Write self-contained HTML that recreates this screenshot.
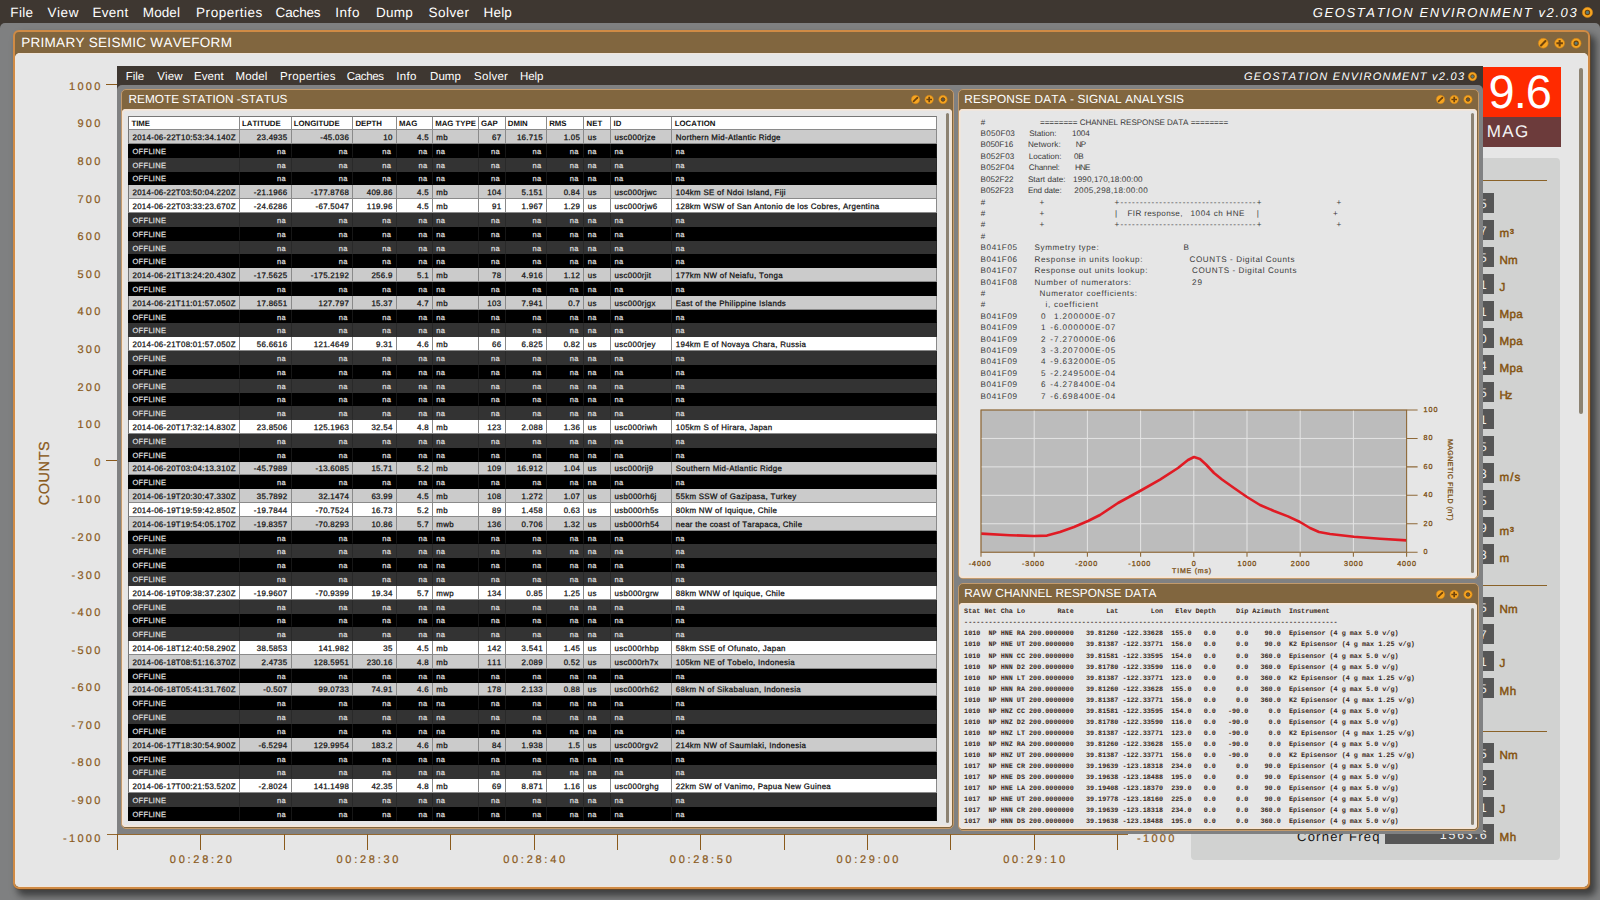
<!DOCTYPE html>
<html><head><meta charset="utf-8"><title>GEOSTATION ENVIRONMENT v2.03</title>
<style>
html,body{margin:0;padding:0}
body{width:1600px;height:900px;overflow:hidden;position:relative;background:#3e3731;font-family:"Liberation Sans",sans-serif;font-kerning:none;text-rendering:geometricPrecision}
.b{position:absolute;display:block}
.t{position:absolute;white-space:pre;line-height:1}
.m{position:absolute;white-space:pre;font-family:"Liberation Mono",monospace;font-weight:bold}

.tb{position:absolute;left:128.2px;top:116.3px;width:808.8px;border-collapse:separate;border-spacing:0;table-layout:fixed;font-size:7.9px;line-height:1;color:#111;}
.tb td{padding:2.6px 3.2px 0 3.3px;height:13.816px;-webkit-text-stroke:0.25px currentColor;box-sizing:border-box;white-space:nowrap;overflow:hidden;border-right:1px solid #8a8a8a;border-bottom:1px solid #8a8a8a;letter-spacing:.3px}
.tb td.r{text-align:right}
.tb tr.h td{font-weight:bold;font-size:7.8px;height:13.8px;border-top:1px solid #777;background:#fff;letter-spacing:0;padding:1px 0 0 2.2px;-webkit-text-stroke:0}
.tb td:first-child{border-left:1px solid #777}
.tb tr.g td{background:#cbcbcb}
.tb tr.w td{background:#fff}
.tb tr.k td{background:#000;color:#ddd;border-color:#000;font-size:7.5px}
.tb tr.d td{background:#333;color:#ddd;border-color:#333;font-size:7.5px}
.tb tr.k td+td,.tb tr.d td+td{border-left:0}
.tb tr.k td,.tb tr.d td{border-right-color:#161616;padding-right:4.6px}
.tb tr.d td{border-right-color:#292929}

</style></head><body>
<div class="b" style="left:0.00px;top:23.00px;width:1600.00px;height:877.00px;background:#7f8081;border-radius:5px 5px 0 0;"></div>
<span class="t" style="left:10.30px;top:6.00px;font-size:13.50px;letter-spacing:0.349px;color:#fff;">File</span>
<span class="t" style="left:47.40px;top:6.00px;font-size:13.50px;letter-spacing:0.613px;color:#fff;">View</span>
<span class="t" style="left:92.40px;top:6.00px;font-size:13.50px;letter-spacing:0.320px;color:#fff;">Event</span>
<span class="t" style="left:142.80px;top:6.00px;font-size:13.50px;letter-spacing:0.083px;color:#fff;">Model</span>
<span class="t" style="left:196.10px;top:6.00px;font-size:13.50px;letter-spacing:0.519px;color:#fff;">Properties</span>
<span class="t" style="left:275.60px;top:6.00px;font-size:13.50px;letter-spacing:-0.155px;color:#fff;">Caches</span>
<span class="t" style="left:335.20px;top:6.00px;font-size:13.50px;letter-spacing:0.561px;color:#fff;">Info</span>
<span class="t" style="left:376.00px;top:6.00px;font-size:13.50px;letter-spacing:0.230px;color:#fff;">Dump</span>
<span class="t" style="left:428.60px;top:6.00px;font-size:13.50px;letter-spacing:0.427px;color:#fff;">Solver</span>
<span class="t" style="left:483.60px;top:6.00px;font-size:13.50px;letter-spacing:0.145px;color:#fff;">Help</span>
<span class="t" style="left:1312.80px;top:6.35px;font-size:13.00px;letter-spacing:1.614px;color:#fff;font-style:italic;">GEOSTATION ENVIRONMENT v2.03</span>
<svg class="b" style="left:1581.15px;top:5.95px" width="12.90" height="12.90"><circle cx="6.45" cy="6.45" r="5.12" fill="#f7a521" stroke="#c9801a" stroke-width="0.65"/><circle cx="6.45" cy="6.45" r="2.18" fill="#587d7c" stroke="#6e430c" stroke-width="1.08"/></svg>
<div class="b" style="left:13px;top:30px;width:1573px;height:855px;border:2px solid #d08b45;border-radius:6px;background:#81663f;box-shadow:0.6px 0.8px 0 0 #6e4720,5px 6px 7px 1px rgba(20,20,20,.6)"></div>
<div class="b" style="left:15.00px;top:53.00px;width:1573.00px;height:834.00px;background:#e6e6e6;border-radius:5px;box-shadow:inset 0 0 0 1px #f1e6dc;"></div>
<span class="t" style="left:21.20px;top:35.50px;font-size:13.50px;letter-spacing:0.291px;color:#fff;">PRIMARY SEISMIC WAVEFORM</span>
<svg class="b" style="left:1536.75px;top:36.85px" width="45.40" height="12.50" viewBox="0 0 45.40 12.50"><circle cx="6.25" cy="6.25" r="4.93" fill="#f7a521" stroke="#c9801a" stroke-width="0.63"/><path d="M4.04 8.46 L8.46 4.04" stroke="#6e430c" stroke-width="2.04" stroke-linecap="round"/><circle cx="22.65" cy="6.25" r="4.93" fill="#f7a521" stroke="#c9801a" stroke-width="0.63"/><path d="M19.40 6.25 H25.91 M22.65 3.00 V9.50" stroke="#6e430c" stroke-width="2.04"/><circle cx="39.15" cy="6.25" r="4.93" fill="#f7a521" stroke="#c9801a" stroke-width="0.63"/><circle cx="39.15" cy="6.25" r="2.10" fill="#587d7c" stroke="#6e430c" stroke-width="1.08"/></svg>
<div class="b" style="left:1579.00px;top:68.00px;width:4.40px;height:346.00px;background:#8c8272;border-radius:2px;"></div>
<span class="t" style="left:69.03px;top:81.85px;font-size:11.00px;letter-spacing:2.300px;color:#8a5a1c;-webkit-text-stroke:.2px;">1000</span>
<span class="t" style="left:77.45px;top:119.44px;font-size:11.00px;letter-spacing:2.300px;color:#8a5a1c;-webkit-text-stroke:.2px;">900</span>
<span class="t" style="left:77.45px;top:157.03px;font-size:11.00px;letter-spacing:2.300px;color:#8a5a1c;-webkit-text-stroke:.2px;">800</span>
<span class="t" style="left:77.45px;top:194.62px;font-size:11.00px;letter-spacing:2.300px;color:#8a5a1c;-webkit-text-stroke:.2px;">700</span>
<span class="t" style="left:77.45px;top:232.21px;font-size:11.00px;letter-spacing:2.300px;color:#8a5a1c;-webkit-text-stroke:.2px;">600</span>
<span class="t" style="left:77.45px;top:269.80px;font-size:11.00px;letter-spacing:2.300px;color:#8a5a1c;-webkit-text-stroke:.2px;">500</span>
<span class="t" style="left:77.45px;top:307.39px;font-size:11.00px;letter-spacing:2.300px;color:#8a5a1c;-webkit-text-stroke:.2px;">400</span>
<span class="t" style="left:77.45px;top:344.98px;font-size:11.00px;letter-spacing:2.300px;color:#8a5a1c;-webkit-text-stroke:.2px;">300</span>
<span class="t" style="left:77.45px;top:382.57px;font-size:11.00px;letter-spacing:2.300px;color:#8a5a1c;-webkit-text-stroke:.2px;">200</span>
<span class="t" style="left:77.45px;top:420.16px;font-size:11.00px;letter-spacing:2.300px;color:#8a5a1c;-webkit-text-stroke:.2px;">100</span>
<span class="t" style="left:94.28px;top:457.75px;font-size:11.00px;letter-spacing:2.300px;color:#8a5a1c;-webkit-text-stroke:.2px;">0</span>
<span class="t" style="left:71.48px;top:495.34px;font-size:11.00px;letter-spacing:2.300px;color:#8a5a1c;-webkit-text-stroke:.2px;">-100</span>
<span class="t" style="left:71.48px;top:532.93px;font-size:11.00px;letter-spacing:2.300px;color:#8a5a1c;-webkit-text-stroke:.2px;">-200</span>
<span class="t" style="left:71.48px;top:570.52px;font-size:11.00px;letter-spacing:2.300px;color:#8a5a1c;-webkit-text-stroke:.2px;">-300</span>
<span class="t" style="left:71.48px;top:608.11px;font-size:11.00px;letter-spacing:2.300px;color:#8a5a1c;-webkit-text-stroke:.2px;">-400</span>
<span class="t" style="left:71.48px;top:645.70px;font-size:11.00px;letter-spacing:2.300px;color:#8a5a1c;-webkit-text-stroke:.2px;">-500</span>
<span class="t" style="left:71.48px;top:683.29px;font-size:11.00px;letter-spacing:2.300px;color:#8a5a1c;-webkit-text-stroke:.2px;">-600</span>
<span class="t" style="left:71.48px;top:720.88px;font-size:11.00px;letter-spacing:2.300px;color:#8a5a1c;-webkit-text-stroke:.2px;">-700</span>
<span class="t" style="left:71.48px;top:758.47px;font-size:11.00px;letter-spacing:2.300px;color:#8a5a1c;-webkit-text-stroke:.2px;">-800</span>
<span class="t" style="left:71.48px;top:796.06px;font-size:11.00px;letter-spacing:2.300px;color:#8a5a1c;-webkit-text-stroke:.2px;">-900</span>
<span class="t" style="left:63.07px;top:833.65px;font-size:11.00px;letter-spacing:2.300px;color:#8a5a1c;-webkit-text-stroke:.2px;">-1000</span>
<div class="b" style="left:106.00px;top:84.00px;width:12.00px;height:1.20px;background:#8a5a1c;"></div>
<div class="b" style="left:106.00px;top:459.60px;width:12.00px;height:1.20px;background:#8a5a1c;"></div>
<div class="b" style="left:107.00px;top:834.00px;width:1021.00px;height:1.00px;background:#94682f;"></div>
<div class="b" style="left:116.90px;top:834.00px;width:1.20px;height:15.60px;background:#8a5a1c;"></div>
<div class="b" style="left:200.23px;top:834.00px;width:1.20px;height:15.60px;background:#8a5a1c;"></div>
<div class="b" style="left:283.57px;top:834.00px;width:1.20px;height:15.60px;background:#8a5a1c;"></div>
<div class="b" style="left:366.90px;top:834.00px;width:1.20px;height:15.60px;background:#8a5a1c;"></div>
<div class="b" style="left:450.23px;top:834.00px;width:1.20px;height:15.60px;background:#8a5a1c;"></div>
<div class="b" style="left:533.56px;top:834.00px;width:1.20px;height:15.60px;background:#8a5a1c;"></div>
<div class="b" style="left:616.90px;top:834.00px;width:1.20px;height:15.60px;background:#8a5a1c;"></div>
<div class="b" style="left:700.23px;top:834.00px;width:1.20px;height:15.60px;background:#8a5a1c;"></div>
<div class="b" style="left:783.56px;top:834.00px;width:1.20px;height:15.60px;background:#8a5a1c;"></div>
<div class="b" style="left:866.90px;top:834.00px;width:1.20px;height:15.60px;background:#8a5a1c;"></div>
<div class="b" style="left:950.23px;top:834.00px;width:1.20px;height:15.60px;background:#8a5a1c;"></div>
<div class="b" style="left:1033.56px;top:834.00px;width:1.20px;height:15.60px;background:#8a5a1c;"></div>
<div class="b" style="left:1116.90px;top:834.00px;width:1.20px;height:15.60px;background:#8a5a1c;"></div>
<span class="t" style="left:169.80px;top:854.85px;font-size:11.00px;letter-spacing:2.740px;color:#8a5a1c;-webkit-text-stroke:.2px;">00:28:20</span>
<span class="t" style="left:336.47px;top:854.85px;font-size:11.00px;letter-spacing:2.740px;color:#8a5a1c;-webkit-text-stroke:.2px;">00:28:30</span>
<span class="t" style="left:503.14px;top:854.85px;font-size:11.00px;letter-spacing:2.740px;color:#8a5a1c;-webkit-text-stroke:.2px;">00:28:40</span>
<span class="t" style="left:669.81px;top:854.85px;font-size:11.00px;letter-spacing:2.740px;color:#8a5a1c;-webkit-text-stroke:.2px;">00:28:50</span>
<span class="t" style="left:836.48px;top:854.85px;font-size:11.00px;letter-spacing:2.740px;color:#8a5a1c;-webkit-text-stroke:.2px;">00:29:00</span>
<span class="t" style="left:1003.15px;top:854.85px;font-size:11.00px;letter-spacing:2.740px;color:#8a5a1c;-webkit-text-stroke:.2px;">00:29:10</span>
<span class="t" style="left:1137.00px;top:833.65px;font-size:11.00px;letter-spacing:2.300px;color:#8a5a1c;-webkit-text-stroke:.2px;">-1000</span>
<span class="t" style="left:45.2px;top:473px;font-size:14.5px;letter-spacing:0.55px;-webkit-text-stroke:0.25px;color:#8a5a1c;transform:translate(-50%,-50%) rotate(-90deg);">COUNTS</span>
<div class="b" style="left:1190.50px;top:157.60px;width:369.50px;height:702.20px;background:#d1d2d1;border-radius:4px;"></div>
<div class="b" style="left:1205.00px;top:180.00px;width:341.60px;height:1.00px;background:#8a6228;"></div>
<div class="b" style="left:1205.00px;top:584.50px;width:341.60px;height:1.00px;background:#8a6228;"></div>
<div class="b" style="left:1205.00px;top:730.50px;width:341.60px;height:1.00px;background:#8a6228;"></div>
<div class="b" style="left:1385.00px;top:193.20px;width:109.40px;height:20.00px;background:#565656;"></div>
<span class="t" style="left:1457.17px;top:197.80px;font-size:12.50px;letter-spacing:1.700px;color:#f0f0f0;">24.5</span>
<div class="b" style="left:1385.00px;top:220.20px;width:109.40px;height:20.00px;background:#565656;"></div>
<span class="t" style="left:1457.17px;top:224.80px;font-size:12.50px;letter-spacing:1.700px;color:#f0f0f0;">0.87</span>
<span class="t" style="left:1499.40px;top:227.58px;font-size:11.60px;letter-spacing:1.074px;color:#84520f;-webkit-text-stroke:.45px;">m³</span>
<div class="b" style="left:1385.00px;top:247.20px;width:109.40px;height:20.00px;background:#565656;"></div>
<span class="t" style="left:1429.48px;top:251.80px;font-size:12.50px;letter-spacing:1.700px;color:#f0f0f0;">1.2E+15</span>
<span class="t" style="left:1499.40px;top:254.71px;font-size:11.60px;letter-spacing:0.260px;color:#84520f;-webkit-text-stroke:.45px;">Nm</span>
<div class="b" style="left:1385.00px;top:274.20px;width:109.40px;height:20.00px;background:#565656;"></div>
<span class="t" style="left:1429.48px;top:278.80px;font-size:12.50px;letter-spacing:1.700px;color:#f0f0f0;">3.1E+11</span>
<span class="t" style="left:1499.40px;top:281.84px;font-size:11.60px;letter-spacing:0.000px;color:#84520f;-webkit-text-stroke:.45px;">J</span>
<div class="b" style="left:1385.00px;top:301.20px;width:109.40px;height:20.00px;background:#565656;"></div>
<span class="t" style="left:1457.17px;top:305.80px;font-size:12.50px;letter-spacing:1.700px;color:#f0f0f0;">2.71</span>
<span class="t" style="left:1499.40px;top:308.97px;font-size:11.60px;letter-spacing:0.367px;color:#84520f;-webkit-text-stroke:.45px;">Mpa</span>
<div class="b" style="left:1385.00px;top:328.20px;width:109.40px;height:20.00px;background:#565656;"></div>
<span class="t" style="left:1457.17px;top:332.80px;font-size:12.50px;letter-spacing:1.700px;color:#f0f0f0;">14.0</span>
<span class="t" style="left:1499.40px;top:336.10px;font-size:11.60px;letter-spacing:0.367px;color:#84520f;-webkit-text-stroke:.45px;">Mpa</span>
<div class="b" style="left:1385.00px;top:355.20px;width:109.40px;height:20.00px;background:#565656;"></div>
<span class="t" style="left:1457.17px;top:359.80px;font-size:12.50px;letter-spacing:1.700px;color:#f0f0f0;">0.34</span>
<span class="t" style="left:1499.40px;top:363.23px;font-size:11.60px;letter-spacing:0.367px;color:#84520f;-webkit-text-stroke:.45px;">Mpa</span>
<div class="b" style="left:1385.00px;top:382.20px;width:109.40px;height:20.00px;background:#565656;"></div>
<span class="t" style="left:1457.17px;top:386.80px;font-size:12.50px;letter-spacing:1.700px;color:#f0f0f0;">1.15</span>
<span class="t" style="left:1499.40px;top:390.36px;font-size:11.60px;letter-spacing:-1.377px;color:#84520f;-webkit-text-stroke:.45px;">Hz</span>
<div class="b" style="left:1385.00px;top:409.20px;width:109.40px;height:20.00px;background:#565656;"></div>
<span class="t" style="left:1471.00px;top:413.80px;font-size:12.50px;letter-spacing:1.700px;color:#f0f0f0;">31</span>
<div class="b" style="left:1385.00px;top:436.20px;width:109.40px;height:20.00px;background:#565656;"></div>
<span class="t" style="left:1465.82px;top:440.80px;font-size:12.50px;letter-spacing:1.700px;color:#f0f0f0;">2.5</span>
<div class="b" style="left:1385.00px;top:463.20px;width:109.40px;height:20.00px;background:#565656;"></div>
<span class="t" style="left:1457.17px;top:467.80px;font-size:12.50px;letter-spacing:1.700px;color:#f0f0f0;">3.43</span>
<span class="t" style="left:1499.40px;top:471.75px;font-size:11.60px;letter-spacing:1.157px;color:#84520f;-webkit-text-stroke:.45px;">m/s</span>
<div class="b" style="left:1385.00px;top:490.20px;width:109.40px;height:20.00px;background:#565656;"></div>
<span class="t" style="left:1457.17px;top:494.80px;font-size:12.50px;letter-spacing:1.700px;color:#f0f0f0;">0.25</span>
<div class="b" style="left:1385.00px;top:517.20px;width:109.40px;height:20.00px;background:#565656;"></div>
<span class="t" style="left:1438.13px;top:521.80px;font-size:12.50px;letter-spacing:1.700px;color:#f0f0f0;">1.4E+9</span>
<span class="t" style="left:1499.40px;top:526.01px;font-size:11.60px;letter-spacing:1.074px;color:#84520f;-webkit-text-stroke:.45px;">m³</span>
<div class="b" style="left:1385.00px;top:544.20px;width:109.40px;height:20.00px;background:#565656;"></div>
<span class="t" style="left:1453.69px;top:548.80px;font-size:12.50px;letter-spacing:1.700px;color:#f0f0f0;">5623</span>
<span class="t" style="left:1499.40px;top:553.14px;font-size:11.60px;letter-spacing:0.000px;color:#84520f;-webkit-text-stroke:.45px;">m</span>
<div class="b" style="left:1385.00px;top:597.10px;width:109.40px;height:20.00px;background:#565656;"></div>
<span class="t" style="left:1429.48px;top:601.70px;font-size:12.50px;letter-spacing:1.700px;color:#f0f0f0;">4.2E+15</span>
<span class="t" style="left:1499.40px;top:603.50px;font-size:11.60px;letter-spacing:0.260px;color:#84520f;-webkit-text-stroke:.45px;">Nm</span>
<div class="b" style="left:1385.00px;top:624.10px;width:109.40px;height:20.00px;background:#565656;"></div>
<span class="t" style="left:1465.82px;top:628.70px;font-size:12.50px;letter-spacing:1.700px;color:#f0f0f0;">7.7</span>
<div class="b" style="left:1385.00px;top:651.10px;width:109.40px;height:20.00px;background:#565656;"></div>
<span class="t" style="left:1429.48px;top:655.70px;font-size:12.50px;letter-spacing:1.700px;color:#f0f0f0;">2.8E+11</span>
<span class="t" style="left:1499.40px;top:658.40px;font-size:11.60px;letter-spacing:0.000px;color:#84520f;-webkit-text-stroke:.45px;">J</span>
<div class="b" style="left:1385.00px;top:678.10px;width:109.40px;height:20.00px;background:#565656;"></div>
<span class="t" style="left:1457.17px;top:682.70px;font-size:12.50px;letter-spacing:1.700px;color:#f0f0f0;">1.35</span>
<span class="t" style="left:1499.40px;top:685.85px;font-size:11.60px;letter-spacing:0.786px;color:#84520f;-webkit-text-stroke:.45px;">Mh</span>
<div class="b" style="left:1385.00px;top:743.10px;width:109.40px;height:20.00px;background:#565656;"></div>
<span class="t" style="left:1429.48px;top:747.70px;font-size:12.50px;letter-spacing:1.700px;color:#f0f0f0;">3.9E+15</span>
<span class="t" style="left:1499.40px;top:749.50px;font-size:11.60px;letter-spacing:0.260px;color:#84520f;-webkit-text-stroke:.45px;">Nm</span>
<div class="b" style="left:1385.00px;top:770.10px;width:109.40px;height:20.00px;background:#565656;"></div>
<span class="t" style="left:1465.82px;top:774.70px;font-size:12.50px;letter-spacing:1.700px;color:#f0f0f0;">8.2</span>
<div class="b" style="left:1385.00px;top:797.10px;width:109.40px;height:20.00px;background:#565656;"></div>
<span class="t" style="left:1429.48px;top:801.70px;font-size:12.50px;letter-spacing:1.700px;color:#f0f0f0;">2.6E+11</span>
<span class="t" style="left:1499.40px;top:804.40px;font-size:11.60px;letter-spacing:0.000px;color:#84520f;-webkit-text-stroke:.45px;">J</span>
<div class="b" style="left:1385.00px;top:824.10px;width:109.40px;height:20.00px;background:#565656;"></div>
<span class="t" style="left:1439.87px;top:828.70px;font-size:12.50px;letter-spacing:1.700px;color:#f0f0f0;">1563.6</span>
<span class="t" style="left:1499.40px;top:831.85px;font-size:11.60px;letter-spacing:0.786px;color:#84520f;-webkit-text-stroke:.45px;">Mh</span>
<span class="t" style="left:1297.00px;top:830.15px;font-size:13.00px;letter-spacing:1.242px;color:#111;">Corner Freq</span>
<div class="b" style="left:1483.00px;top:67.20px;width:78.20px;height:49.50px;background:#ff2a00;"></div>
<div class="b" style="left:1483.00px;top:116.70px;width:78.20px;height:30.60px;background:#6c3b3b;"></div>
<span class="t" style="left:1488.60px;top:67.75px;font-size:47.00px;letter-spacing:-0.968px;color:#fff;">9.6</span>
<span class="t" style="left:1486.70px;top:122.55px;font-size:17.00px;letter-spacing:1.438px;color:#f4f4f4;">MAG</span>
<div class="b" style="left:117.00px;top:66.00px;width:1366.00px;height:26.00px;background:#3e3731;"></div>
<div class="b" style="left:117.00px;top:85.00px;width:1366.00px;height:749.00px;background:#808182;border-radius:5px 5px 0 0;"></div>
<span class="t" style="left:125.70px;top:72.10px;font-size:11.50px;letter-spacing:-0.010px;color:#fff;">File</span>
<span class="t" style="left:157.20px;top:72.10px;font-size:11.50px;letter-spacing:0.125px;color:#fff;">View</span>
<span class="t" style="left:194.00px;top:72.10px;font-size:11.50px;letter-spacing:0.098px;color:#fff;">Event</span>
<span class="t" style="left:235.40px;top:72.10px;font-size:11.50px;letter-spacing:0.170px;color:#fff;">Model</span>
<span class="t" style="left:280.10px;top:72.10px;font-size:11.50px;letter-spacing:0.332px;color:#fff;">Properties</span>
<span class="t" style="left:346.70px;top:72.10px;font-size:11.50px;letter-spacing:-0.318px;color:#fff;">Caches</span>
<span class="t" style="left:396.20px;top:72.10px;font-size:11.50px;letter-spacing:0.373px;color:#fff;">Info</span>
<span class="t" style="left:430.00px;top:72.10px;font-size:11.50px;letter-spacing:0.075px;color:#fff;">Dump</span>
<span class="t" style="left:474.10px;top:72.10px;font-size:11.50px;letter-spacing:0.241px;color:#fff;">Solver</span>
<span class="t" style="left:520.00px;top:72.10px;font-size:11.50px;letter-spacing:-0.117px;color:#fff;">Help</span>
<span class="t" style="left:1244.00px;top:72.15px;font-size:11.00px;letter-spacing:1.244px;color:#fff;font-style:italic;">GEOSTATION ENVIRONMENT v2.03</span>
<svg class="b" style="left:1467.20px;top:70.80px" width="11.00" height="11.00"><circle cx="5.50" cy="5.50" r="4.23" fill="#f7a521" stroke="#c9801a" stroke-width="0.54"/><circle cx="5.50" cy="5.50" r="1.80" fill="#587d7c" stroke="#6e430c" stroke-width="0.95"/></svg>
<div class="b" style="left:120.60px;top:89.00px;width:831.00px;height:737.80px;border:1px solid #c29a6c;border-radius:5px;background:#81663f;"></div>
<div class="b" style="left:122.40px;top:108.50px;width:829.40px;height:718.50px;background:#e6e6e6;border-radius:4px;box-shadow:inset 0 0 0 1.4px #f7e5d5;"></div>
<span class="t" style="left:128.50px;top:93.55px;font-size:11.80px;letter-spacing:0.012px;color:#fff;">REMOTE STATION -STATUS</span>
<svg class="b" style="left:909.80px;top:94.10px" width="38.50" height="11.00" viewBox="0 0 38.50 11.00"><circle cx="5.50" cy="5.50" r="4.23" fill="#f7a521" stroke="#c9801a" stroke-width="0.54"/><path d="M3.61 7.39 L7.39 3.61" stroke="#6e430c" stroke-width="1.70" stroke-linecap="round"/><circle cx="19.20" cy="5.50" r="4.23" fill="#f7a521" stroke="#c9801a" stroke-width="0.54"/><path d="M16.41 5.50 H21.99 M19.20 2.71 V8.29" stroke="#6e430c" stroke-width="1.70"/><circle cx="33.00" cy="5.50" r="4.23" fill="#f7a521" stroke="#c9801a" stroke-width="0.54"/><circle cx="33.00" cy="5.50" r="1.80" fill="#5e5a4c" stroke="#6e430c" stroke-width="0.90"/></svg>
<div class="b" style="left:945.80px;top:113.40px;width:3.40px;height:709.40px;background:#8c8272;border-radius:1.5px;"></div>
<div class="b" style="left:957.60px;top:89.00px;width:519.00px;height:488.30px;border:1px solid #c29a6c;border-radius:5px;background:#81663f;"></div>
<div class="b" style="left:959.40px;top:108.50px;width:517.40px;height:469.00px;background:#e6e6e6;border-radius:4px;box-shadow:inset 0 0 0 1.4px #f7e5d5;"></div>
<span class="t" style="left:964.30px;top:93.55px;font-size:11.80px;letter-spacing:0.154px;color:#fff;">RESPONSE DATA - SIGNAL ANALYSIS</span>
<svg class="b" style="left:1434.80px;top:94.10px" width="38.50" height="11.00" viewBox="0 0 38.50 11.00"><circle cx="5.50" cy="5.50" r="4.23" fill="#f7a521" stroke="#c9801a" stroke-width="0.54"/><path d="M3.61 7.39 L7.39 3.61" stroke="#6e430c" stroke-width="1.70" stroke-linecap="round"/><circle cx="19.20" cy="5.50" r="4.23" fill="#f7a521" stroke="#c9801a" stroke-width="0.54"/><path d="M16.41 5.50 H21.99 M19.20 2.71 V8.29" stroke="#6e430c" stroke-width="1.70"/><circle cx="33.00" cy="5.50" r="4.23" fill="#f7a521" stroke="#c9801a" stroke-width="0.54"/><circle cx="33.00" cy="5.50" r="1.80" fill="#5e5a4c" stroke="#6e430c" stroke-width="0.90"/></svg>
<div class="b" style="left:1470.80px;top:113.40px;width:3.40px;height:459.90px;background:#8c8272;border-radius:1.5px;"></div>
<div class="b" style="left:957.60px;top:583.40px;width:519.00px;height:245.60px;border:1px solid #c29a6c;border-radius:5px;background:#81663f;"></div>
<div class="b" style="left:959.40px;top:602.90px;width:517.40px;height:226.30px;background:#e6e6e6;border-radius:4px;box-shadow:inset 0 0 0 1.4px #f7e5d5;"></div>
<span class="t" style="left:964.30px;top:587.95px;font-size:11.80px;letter-spacing:0.054px;color:#fff;">RAW CHANNEL RESPONSE DATA</span>
<svg class="b" style="left:1434.80px;top:588.50px" width="38.50" height="11.00" viewBox="0 0 38.50 11.00"><circle cx="5.50" cy="5.50" r="4.23" fill="#f7a521" stroke="#c9801a" stroke-width="0.54"/><path d="M3.61 7.39 L7.39 3.61" stroke="#6e430c" stroke-width="1.70" stroke-linecap="round"/><circle cx="19.20" cy="5.50" r="4.23" fill="#f7a521" stroke="#c9801a" stroke-width="0.54"/><path d="M16.41 5.50 H21.99 M19.20 2.71 V8.29" stroke="#6e430c" stroke-width="1.70"/><circle cx="33.00" cy="5.50" r="4.23" fill="#f7a521" stroke="#c9801a" stroke-width="0.54"/><circle cx="33.00" cy="5.50" r="1.80" fill="#5e5a4c" stroke="#6e430c" stroke-width="0.90"/></svg>
<div class="b" style="left:1470.80px;top:607.80px;width:3.40px;height:217.20px;background:#8c8272;border-radius:1.5px;"></div>
<table class="tb"><colgroup><col style="width:111.70px"><col style="width:51.70px"><col style="width:61.70px"><col style="width:43.60px"><col style="width:36.20px"><col style="width:45.70px"><col style="width:26.90px"><col style="width:41.40px"><col style="width:37.40px"><col style="width:26.90px"><col style="width:61.20px"><col style="width:264.40px"></colgroup><tr class="h"><td>TIME</td><td>LATITUDE</td><td>LONGITUDE</td><td>DEPTH</td><td>MAG</td><td>MAG TYPE</td><td>GAP</td><td>DMIN</td><td>RMS</td><td>NET</td><td>ID</td><td>LOCATION</td></tr><tr class="g"><td>2014-06-22T10:53:34.140Z</td><td class="r">23.4935</td><td class="r">-45.036</td><td class="r">10</td><td class="r">4.5</td><td>mb</td><td class="r">67</td><td class="r">16.715</td><td class="r">1.05</td><td>us</td><td>usc000rjze</td><td>Northern Mid-Atlantic Ridge</td></tr><tr class="k"><td>OFFLINE</td><td class="r">na</td><td class="r">na</td><td class="r">na</td><td class="r">na</td><td>na</td><td class="r">na</td><td class="r">na</td><td class="r">na</td><td>na</td><td>na</td><td>na</td></tr><tr class="d"><td>OFFLINE</td><td class="r">na</td><td class="r">na</td><td class="r">na</td><td class="r">na</td><td>na</td><td class="r">na</td><td class="r">na</td><td class="r">na</td><td>na</td><td>na</td><td>na</td></tr><tr class="k"><td>OFFLINE</td><td class="r">na</td><td class="r">na</td><td class="r">na</td><td class="r">na</td><td>na</td><td class="r">na</td><td class="r">na</td><td class="r">na</td><td>na</td><td>na</td><td>na</td></tr><tr class="g"><td>2014-06-22T03:50:04.220Z</td><td class="r">-21.1966</td><td class="r">-177.8768</td><td class="r">409.86</td><td class="r">4.5</td><td>mb</td><td class="r">104</td><td class="r">5.151</td><td class="r">0.84</td><td>us</td><td>usc000rjwc</td><td>104km SE of Ndoi Island, Fiji</td></tr><tr class="w"><td>2014-06-22T03:33:23.670Z</td><td class="r">-24.6286</td><td class="r">-67.5047</td><td class="r">119.96</td><td class="r">4.5</td><td>mb</td><td class="r">91</td><td class="r">1.967</td><td class="r">1.29</td><td>us</td><td>usc000rjw6</td><td>128km WSW of San Antonio de los Cobres, Argentina</td></tr><tr class="d"><td>OFFLINE</td><td class="r">na</td><td class="r">na</td><td class="r">na</td><td class="r">na</td><td>na</td><td class="r">na</td><td class="r">na</td><td class="r">na</td><td>na</td><td>na</td><td>na</td></tr><tr class="k"><td>OFFLINE</td><td class="r">na</td><td class="r">na</td><td class="r">na</td><td class="r">na</td><td>na</td><td class="r">na</td><td class="r">na</td><td class="r">na</td><td>na</td><td>na</td><td>na</td></tr><tr class="d"><td>OFFLINE</td><td class="r">na</td><td class="r">na</td><td class="r">na</td><td class="r">na</td><td>na</td><td class="r">na</td><td class="r">na</td><td class="r">na</td><td>na</td><td>na</td><td>na</td></tr><tr class="k"><td>OFFLINE</td><td class="r">na</td><td class="r">na</td><td class="r">na</td><td class="r">na</td><td>na</td><td class="r">na</td><td class="r">na</td><td class="r">na</td><td>na</td><td>na</td><td>na</td></tr><tr class="g"><td>2014-06-21T13:24:20.430Z</td><td class="r">-17.5625</td><td class="r">-175.2192</td><td class="r">256.9</td><td class="r">5.1</td><td>mb</td><td class="r">78</td><td class="r">4.916</td><td class="r">1.12</td><td>us</td><td>usc000rjit</td><td>177km NW of Neiafu, Tonga</td></tr><tr class="k"><td>OFFLINE</td><td class="r">na</td><td class="r">na</td><td class="r">na</td><td class="r">na</td><td>na</td><td class="r">na</td><td class="r">na</td><td class="r">na</td><td>na</td><td>na</td><td>na</td></tr><tr class="g"><td>2014-06-21T11:01:57.050Z</td><td class="r">17.8651</td><td class="r">127.797</td><td class="r">15.37</td><td class="r">4.7</td><td>mb</td><td class="r">103</td><td class="r">7.941</td><td class="r">0.7</td><td>us</td><td>usc000rjgx</td><td>East of the Philippine Islands</td></tr><tr class="k"><td>OFFLINE</td><td class="r">na</td><td class="r">na</td><td class="r">na</td><td class="r">na</td><td>na</td><td class="r">na</td><td class="r">na</td><td class="r">na</td><td>na</td><td>na</td><td>na</td></tr><tr class="d"><td>OFFLINE</td><td class="r">na</td><td class="r">na</td><td class="r">na</td><td class="r">na</td><td>na</td><td class="r">na</td><td class="r">na</td><td class="r">na</td><td>na</td><td>na</td><td>na</td></tr><tr class="w"><td>2014-06-21T08:01:57.050Z</td><td class="r">56.6616</td><td class="r">121.4649</td><td class="r">9.31</td><td class="r">4.6</td><td>mb</td><td class="r">66</td><td class="r">6.825</td><td class="r">0.82</td><td>us</td><td>usc000rjey</td><td>194km E of Novaya Chara, Russia</td></tr><tr class="d"><td>OFFLINE</td><td class="r">na</td><td class="r">na</td><td class="r">na</td><td class="r">na</td><td>na</td><td class="r">na</td><td class="r">na</td><td class="r">na</td><td>na</td><td>na</td><td>na</td></tr><tr class="k"><td>OFFLINE</td><td class="r">na</td><td class="r">na</td><td class="r">na</td><td class="r">na</td><td>na</td><td class="r">na</td><td class="r">na</td><td class="r">na</td><td>na</td><td>na</td><td>na</td></tr><tr class="d"><td>OFFLINE</td><td class="r">na</td><td class="r">na</td><td class="r">na</td><td class="r">na</td><td>na</td><td class="r">na</td><td class="r">na</td><td class="r">na</td><td>na</td><td>na</td><td>na</td></tr><tr class="k"><td>OFFLINE</td><td class="r">na</td><td class="r">na</td><td class="r">na</td><td class="r">na</td><td>na</td><td class="r">na</td><td class="r">na</td><td class="r">na</td><td>na</td><td>na</td><td>na</td></tr><tr class="d"><td>OFFLINE</td><td class="r">na</td><td class="r">na</td><td class="r">na</td><td class="r">na</td><td>na</td><td class="r">na</td><td class="r">na</td><td class="r">na</td><td>na</td><td>na</td><td>na</td></tr><tr class="w"><td>2014-06-20T17:32:14.830Z</td><td class="r">23.8506</td><td class="r">125.1963</td><td class="r">32.54</td><td class="r">4.8</td><td>mb</td><td class="r">123</td><td class="r">2.088</td><td class="r">1.36</td><td>us</td><td>usc000riwh</td><td>105km S of Hirara, Japan</td></tr><tr class="d"><td>OFFLINE</td><td class="r">na</td><td class="r">na</td><td class="r">na</td><td class="r">na</td><td>na</td><td class="r">na</td><td class="r">na</td><td class="r">na</td><td>na</td><td>na</td><td>na</td></tr><tr class="k"><td>OFFLINE</td><td class="r">na</td><td class="r">na</td><td class="r">na</td><td class="r">na</td><td>na</td><td class="r">na</td><td class="r">na</td><td class="r">na</td><td>na</td><td>na</td><td>na</td></tr><tr class="g"><td>2014-06-20T03:04:13.310Z</td><td class="r">-45.7989</td><td class="r">-13.6085</td><td class="r">15.71</td><td class="r">5.2</td><td>mb</td><td class="r">109</td><td class="r">16.912</td><td class="r">1.04</td><td>us</td><td>usc000rij9</td><td>Southern Mid-Atlantic Ridge</td></tr><tr class="k"><td>OFFLINE</td><td class="r">na</td><td class="r">na</td><td class="r">na</td><td class="r">na</td><td>na</td><td class="r">na</td><td class="r">na</td><td class="r">na</td><td>na</td><td>na</td><td>na</td></tr><tr class="g"><td>2014-06-19T20:30:47.330Z</td><td class="r">35.7892</td><td class="r">32.1474</td><td class="r">63.99</td><td class="r">4.5</td><td>mb</td><td class="r">108</td><td class="r">1.272</td><td class="r">1.07</td><td>us</td><td>usb000rh6j</td><td>55km SSW of Gazipasa, Turkey</td></tr><tr class="w"><td>2014-06-19T19:59:42.850Z</td><td class="r">-19.7844</td><td class="r">-70.7524</td><td class="r">16.73</td><td class="r">5.2</td><td>mb</td><td class="r">89</td><td class="r">1.458</td><td class="r">0.63</td><td>us</td><td>usb000rh5s</td><td>80km NW of Iquique, Chile</td></tr><tr class="g"><td>2014-06-19T19:54:05.170Z</td><td class="r">-19.8357</td><td class="r">-70.8293</td><td class="r">10.86</td><td class="r">5.7</td><td>mwb</td><td class="r">136</td><td class="r">0.706</td><td class="r">1.32</td><td>us</td><td>usb000rh54</td><td>near the coast of Tarapaca, Chile</td></tr><tr class="k"><td>OFFLINE</td><td class="r">na</td><td class="r">na</td><td class="r">na</td><td class="r">na</td><td>na</td><td class="r">na</td><td class="r">na</td><td class="r">na</td><td>na</td><td>na</td><td>na</td></tr><tr class="d"><td>OFFLINE</td><td class="r">na</td><td class="r">na</td><td class="r">na</td><td class="r">na</td><td>na</td><td class="r">na</td><td class="r">na</td><td class="r">na</td><td>na</td><td>na</td><td>na</td></tr><tr class="k"><td>OFFLINE</td><td class="r">na</td><td class="r">na</td><td class="r">na</td><td class="r">na</td><td>na</td><td class="r">na</td><td class="r">na</td><td class="r">na</td><td>na</td><td>na</td><td>na</td></tr><tr class="d"><td>OFFLINE</td><td class="r">na</td><td class="r">na</td><td class="r">na</td><td class="r">na</td><td>na</td><td class="r">na</td><td class="r">na</td><td class="r">na</td><td>na</td><td>na</td><td>na</td></tr><tr class="w"><td>2014-06-19T09:38:37.230Z</td><td class="r">-19.9607</td><td class="r">-70.9399</td><td class="r">19.34</td><td class="r">5.7</td><td>mwp</td><td class="r">134</td><td class="r">0.85</td><td class="r">1.25</td><td>us</td><td>usb000rgrw</td><td>88km WNW of Iquique, Chile</td></tr><tr class="d"><td>OFFLINE</td><td class="r">na</td><td class="r">na</td><td class="r">na</td><td class="r">na</td><td>na</td><td class="r">na</td><td class="r">na</td><td class="r">na</td><td>na</td><td>na</td><td>na</td></tr><tr class="k"><td>OFFLINE</td><td class="r">na</td><td class="r">na</td><td class="r">na</td><td class="r">na</td><td>na</td><td class="r">na</td><td class="r">na</td><td class="r">na</td><td>na</td><td>na</td><td>na</td></tr><tr class="d"><td>OFFLINE</td><td class="r">na</td><td class="r">na</td><td class="r">na</td><td class="r">na</td><td>na</td><td class="r">na</td><td class="r">na</td><td class="r">na</td><td>na</td><td>na</td><td>na</td></tr><tr class="w"><td>2014-06-18T12:40:58.290Z</td><td class="r">38.5853</td><td class="r">141.982</td><td class="r">35</td><td class="r">4.5</td><td>mb</td><td class="r">142</td><td class="r">3.541</td><td class="r">1.45</td><td>us</td><td>usc000rhbp</td><td>58km SSE of Ofunato, Japan</td></tr><tr class="g"><td>2014-06-18T08:51:16.370Z</td><td class="r">2.4735</td><td class="r">128.5951</td><td class="r">230.16</td><td class="r">4.8</td><td>mb</td><td class="r">111</td><td class="r">2.089</td><td class="r">0.52</td><td>us</td><td>usc000rh7x</td><td>105km NE of Tobelo, Indonesia</td></tr><tr class="k"><td>OFFLINE</td><td class="r">na</td><td class="r">na</td><td class="r">na</td><td class="r">na</td><td>na</td><td class="r">na</td><td class="r">na</td><td class="r">na</td><td>na</td><td>na</td><td>na</td></tr><tr class="g"><td>2014-06-18T05:41:31.760Z</td><td class="r">-0.507</td><td class="r">99.0733</td><td class="r">74.91</td><td class="r">4.6</td><td>mb</td><td class="r">178</td><td class="r">2.133</td><td class="r">0.88</td><td>us</td><td>usc000rh62</td><td>68km N of Sikabaluan, Indonesia</td></tr><tr class="k"><td>OFFLINE</td><td class="r">na</td><td class="r">na</td><td class="r">na</td><td class="r">na</td><td>na</td><td class="r">na</td><td class="r">na</td><td class="r">na</td><td>na</td><td>na</td><td>na</td></tr><tr class="d"><td>OFFLINE</td><td class="r">na</td><td class="r">na</td><td class="r">na</td><td class="r">na</td><td>na</td><td class="r">na</td><td class="r">na</td><td class="r">na</td><td>na</td><td>na</td><td>na</td></tr><tr class="k"><td>OFFLINE</td><td class="r">na</td><td class="r">na</td><td class="r">na</td><td class="r">na</td><td>na</td><td class="r">na</td><td class="r">na</td><td class="r">na</td><td>na</td><td>na</td><td>na</td></tr><tr class="g"><td>2014-06-17T18:30:54.900Z</td><td class="r">-6.5294</td><td class="r">129.9954</td><td class="r">183.2</td><td class="r">4.6</td><td>mb</td><td class="r">84</td><td class="r">1.938</td><td class="r">1.5</td><td>us</td><td>usc000rgv2</td><td>214km NW of Saumlaki, Indonesia</td></tr><tr class="k"><td>OFFLINE</td><td class="r">na</td><td class="r">na</td><td class="r">na</td><td class="r">na</td><td>na</td><td class="r">na</td><td class="r">na</td><td class="r">na</td><td>na</td><td>na</td><td>na</td></tr><tr class="d"><td>OFFLINE</td><td class="r">na</td><td class="r">na</td><td class="r">na</td><td class="r">na</td><td>na</td><td class="r">na</td><td class="r">na</td><td class="r">na</td><td>na</td><td>na</td><td>na</td></tr><tr class="w"><td>2014-06-17T00:21:53.520Z</td><td class="r">-2.8024</td><td class="r">141.1498</td><td class="r">42.35</td><td class="r">4.8</td><td>mb</td><td class="r">69</td><td class="r">8.871</td><td class="r">1.16</td><td>us</td><td>usc000rghg</td><td>22km SW of Vanimo, Papua New Guinea</td></tr><tr class="d"><td>OFFLINE</td><td class="r">na</td><td class="r">na</td><td class="r">na</td><td class="r">na</td><td>na</td><td class="r">na</td><td class="r">na</td><td class="r">na</td><td>na</td><td>na</td><td>na</td></tr><tr class="k"><td>OFFLINE</td><td class="r">na</td><td class="r">na</td><td class="r">na</td><td class="r">na</td><td>na</td><td class="r">na</td><td class="r">na</td><td class="r">na</td><td>na</td><td>na</td><td>na</td></tr></table>
<span class="t" style="left:980.80px;top:118.65px;font-size:8.10px;letter-spacing:0.500px;color:#3a3a3a;">#</span>
<span class="t" style="left:1040.00px;top:118.65px;font-size:8.10px;letter-spacing:-0.045px;color:#3a3a3a;">======== CHANNEL RESPONSE DATA ========</span>
<span class="t" style="left:980.60px;top:130.07px;font-size:8.10px;letter-spacing:0.238px;color:#3a3a3a;">B050F03</span>
<span class="t" style="left:1029.20px;top:130.07px;font-size:8.10px;letter-spacing:-0.010px;color:#3a3a3a;">Station:</span>
<span class="t" style="left:1072.00px;top:130.07px;font-size:8.10px;letter-spacing:-0.106px;color:#3a3a3a;">1004</span>
<span class="t" style="left:980.60px;top:141.49px;font-size:8.10px;letter-spacing:-0.046px;color:#3a3a3a;">B050F16</span>
<span class="t" style="left:1027.90px;top:141.49px;font-size:8.10px;letter-spacing:0.120px;color:#3a3a3a;">Network:</span>
<span class="t" style="left:1075.70px;top:141.49px;font-size:8.10px;letter-spacing:-0.852px;color:#3a3a3a;">NP</span>
<span class="t" style="left:980.60px;top:152.91px;font-size:8.10px;letter-spacing:0.154px;color:#3a3a3a;">B052F03</span>
<span class="t" style="left:1028.80px;top:152.91px;font-size:8.10px;letter-spacing:-0.034px;color:#3a3a3a;">Location:</span>
<span class="t" style="left:1074.00px;top:152.91px;font-size:8.10px;letter-spacing:-0.307px;color:#3a3a3a;">0B</span>
<span class="t" style="left:980.60px;top:164.33px;font-size:8.10px;letter-spacing:0.154px;color:#3a3a3a;">B052F04</span>
<span class="t" style="left:1028.80px;top:164.33px;font-size:8.10px;letter-spacing:-0.189px;color:#3a3a3a;">Channel:</span>
<span class="t" style="left:1074.90px;top:164.33px;font-size:8.10px;letter-spacing:-0.851px;color:#3a3a3a;">HNE</span>
<span class="t" style="left:980.60px;top:175.75px;font-size:8.10px;letter-spacing:0.004px;color:#3a3a3a;">B052F22</span>
<span class="t" style="left:1027.90px;top:175.75px;font-size:8.10px;letter-spacing:0.033px;color:#3a3a3a;">Start date:</span>
<span class="t" style="left:1073.10px;top:175.75px;font-size:8.10px;letter-spacing:0.121px;color:#3a3a3a;">1990,170,18:00:00</span>
<span class="t" style="left:980.60px;top:187.17px;font-size:8.10px;letter-spacing:0.004px;color:#3a3a3a;">B052F23</span>
<span class="t" style="left:1027.90px;top:187.17px;font-size:8.10px;letter-spacing:-0.097px;color:#3a3a3a;">End date:</span>
<span class="t" style="left:1074.20px;top:187.17px;font-size:8.10px;letter-spacing:0.371px;color:#3a3a3a;">2005,298,18:00:00</span>
<span class="t" style="left:980.80px;top:198.59px;font-size:8.10px;letter-spacing:0.500px;color:#3a3a3a;">#</span>
<span class="t" style="left:1039.50px;top:198.59px;font-size:8.10px;letter-spacing:0.500px;color:#3a3a3a;">+</span>
<span class="t" style="left:1114.50px;top:198.59px;font-size:8.10px;letter-spacing:1.198px;color:#3a3a3a;">+-----------------------------------+</span>
<span class="t" style="left:1336.50px;top:198.59px;font-size:8.10px;letter-spacing:0.500px;color:#3a3a3a;">+</span>
<span class="t" style="left:980.80px;top:221.43px;font-size:8.10px;letter-spacing:0.500px;color:#3a3a3a;">#</span>
<span class="t" style="left:1039.50px;top:221.43px;font-size:8.10px;letter-spacing:0.500px;color:#3a3a3a;">+</span>
<span class="t" style="left:1114.50px;top:221.43px;font-size:8.10px;letter-spacing:1.198px;color:#3a3a3a;">+-----------------------------------+</span>
<span class="t" style="left:1336.50px;top:221.43px;font-size:8.10px;letter-spacing:0.500px;color:#3a3a3a;">+</span>
<span class="t" style="left:980.80px;top:210.01px;font-size:8.10px;letter-spacing:0.500px;color:#3a3a3a;">#</span>
<span class="t" style="left:1039.50px;top:210.01px;font-size:8.10px;letter-spacing:0.500px;color:#3a3a3a;">+</span>
<span class="t" style="left:1115.00px;top:210.01px;font-size:8.10px;letter-spacing:0.500px;color:#3a3a3a;">|</span>
<span class="t" style="left:1127.50px;top:210.01px;font-size:8.10px;letter-spacing:0.344px;color:#3a3a3a;">FIR response,</span>
<span class="t" style="left:1190.50px;top:210.01px;font-size:8.10px;letter-spacing:0.582px;color:#3a3a3a;">1004 ch HNE</span>
<span class="t" style="left:1256.80px;top:210.01px;font-size:8.10px;letter-spacing:0.500px;color:#3a3a3a;">|</span>
<span class="t" style="left:1333.00px;top:210.01px;font-size:8.10px;letter-spacing:0.500px;color:#3a3a3a;">+</span>
<span class="t" style="left:980.80px;top:232.85px;font-size:8.10px;letter-spacing:0.500px;color:#3a3a3a;">#</span>
<span class="t" style="left:980.60px;top:244.27px;font-size:8.10px;letter-spacing:0.588px;color:#3a3a3a;">B041F05</span>
<span class="t" style="left:1034.50px;top:244.27px;font-size:8.10px;letter-spacing:0.611px;color:#3a3a3a;">Symmetry type:</span>
<span class="t" style="left:1183.50px;top:244.27px;font-size:8.10px;letter-spacing:0.500px;color:#3a3a3a;">B</span>
<span class="t" style="left:980.60px;top:255.69px;font-size:8.10px;letter-spacing:0.588px;color:#3a3a3a;">B041F06</span>
<span class="t" style="left:1034.50px;top:255.69px;font-size:8.10px;letter-spacing:0.635px;color:#3a3a3a;">Response in units lookup:</span>
<span class="t" style="left:1189.50px;top:255.69px;font-size:8.10px;letter-spacing:0.599px;color:#3a3a3a;">COUNTS - Digital Counts</span>
<span class="t" style="left:980.60px;top:267.11px;font-size:8.10px;letter-spacing:0.588px;color:#3a3a3a;">B041F07</span>
<span class="t" style="left:1034.50px;top:267.11px;font-size:8.10px;letter-spacing:0.611px;color:#3a3a3a;">Response out units lookup:</span>
<span class="t" style="left:1192.00px;top:267.11px;font-size:8.10px;letter-spacing:0.576px;color:#3a3a3a;">COUNTS - Digital Counts</span>
<span class="t" style="left:980.60px;top:278.53px;font-size:8.10px;letter-spacing:0.588px;color:#3a3a3a;">B041F08</span>
<span class="t" style="left:1034.50px;top:278.53px;font-size:8.10px;letter-spacing:0.661px;color:#3a3a3a;">Number of numerators:</span>
<span class="t" style="left:1192.00px;top:278.53px;font-size:8.10px;letter-spacing:0.990px;color:#3a3a3a;">29</span>
<span class="t" style="left:980.80px;top:289.95px;font-size:8.10px;letter-spacing:0.500px;color:#3a3a3a;">#</span>
<span class="t" style="left:1039.50px;top:289.95px;font-size:8.10px;letter-spacing:0.646px;color:#3a3a3a;">Numerator coefficients:</span>
<span class="t" style="left:980.80px;top:301.37px;font-size:8.10px;letter-spacing:0.500px;color:#3a3a3a;">#</span>
<span class="t" style="left:1045.50px;top:301.37px;font-size:8.10px;letter-spacing:0.748px;color:#3a3a3a;">i, coefficient</span>
<span class="t" style="left:980.60px;top:312.79px;font-size:8.10px;letter-spacing:0.588px;color:#3a3a3a;">B041F09</span>
<span class="t" style="left:1041.00px;top:312.79px;font-size:8.10px;letter-spacing:0.500px;color:#3a3a3a;">0</span>
<span class="t" style="left:1053.96px;top:312.79px;font-size:8.10px;letter-spacing:0.950px;color:#3a3a3a;">1.200000E-07</span>
<span class="t" style="left:980.60px;top:324.21px;font-size:8.10px;letter-spacing:0.588px;color:#3a3a3a;">B041F09</span>
<span class="t" style="left:1041.00px;top:324.21px;font-size:8.10px;letter-spacing:0.500px;color:#3a3a3a;">1</span>
<span class="t" style="left:1050.31px;top:324.21px;font-size:8.10px;letter-spacing:0.950px;color:#3a3a3a;">-6.000000E-07</span>
<span class="t" style="left:980.60px;top:335.63px;font-size:8.10px;letter-spacing:0.588px;color:#3a3a3a;">B041F09</span>
<span class="t" style="left:1041.00px;top:335.63px;font-size:8.10px;letter-spacing:0.500px;color:#3a3a3a;">2</span>
<span class="t" style="left:1050.31px;top:335.63px;font-size:8.10px;letter-spacing:0.950px;color:#3a3a3a;">-7.270000E-06</span>
<span class="t" style="left:980.60px;top:347.05px;font-size:8.10px;letter-spacing:0.588px;color:#3a3a3a;">B041F09</span>
<span class="t" style="left:1041.00px;top:347.05px;font-size:8.10px;letter-spacing:0.500px;color:#3a3a3a;">3</span>
<span class="t" style="left:1050.31px;top:347.05px;font-size:8.10px;letter-spacing:0.950px;color:#3a3a3a;">-3.207000E-05</span>
<span class="t" style="left:980.60px;top:358.47px;font-size:8.10px;letter-spacing:0.588px;color:#3a3a3a;">B041F09</span>
<span class="t" style="left:1041.00px;top:358.47px;font-size:8.10px;letter-spacing:0.500px;color:#3a3a3a;">4</span>
<span class="t" style="left:1050.31px;top:358.47px;font-size:8.10px;letter-spacing:0.950px;color:#3a3a3a;">-9.632000E-05</span>
<span class="t" style="left:980.60px;top:369.89px;font-size:8.10px;letter-spacing:0.588px;color:#3a3a3a;">B041F09</span>
<span class="t" style="left:1041.00px;top:369.89px;font-size:8.10px;letter-spacing:0.500px;color:#3a3a3a;">5</span>
<span class="t" style="left:1050.31px;top:369.89px;font-size:8.10px;letter-spacing:0.950px;color:#3a3a3a;">-2.249500E-04</span>
<span class="t" style="left:980.60px;top:381.31px;font-size:8.10px;letter-spacing:0.588px;color:#3a3a3a;">B041F09</span>
<span class="t" style="left:1041.00px;top:381.31px;font-size:8.10px;letter-spacing:0.500px;color:#3a3a3a;">6</span>
<span class="t" style="left:1050.31px;top:381.31px;font-size:8.10px;letter-spacing:0.950px;color:#3a3a3a;">-4.278400E-04</span>
<span class="t" style="left:980.60px;top:392.73px;font-size:8.10px;letter-spacing:0.588px;color:#3a3a3a;">B041F09</span>
<span class="t" style="left:1041.00px;top:392.73px;font-size:8.10px;letter-spacing:0.500px;color:#3a3a3a;">7</span>
<span class="t" style="left:1050.31px;top:392.73px;font-size:8.10px;letter-spacing:0.950px;color:#3a3a3a;">-6.698400E-04</span>
<svg class="b" style="left:960px;top:400px" width="515" height="178" viewBox="960 400 515 178" font-family="Liberation Sans, sans-serif" fill="#7d5218" stroke="#7d5218" stroke-width="0.3"><rect x="981.0" y="410.0" width="425.6" height="142.2" fill="#bcbcbc"/><path d="M1034.20 410.0V552.2M1087.40 410.0V552.2M1140.60 410.0V552.2M1193.80 410.0V552.2M1247.00 410.0V552.2M1300.20 410.0V552.2M1353.40 410.0V552.2M981.0 438.44H1406.6M981.0 466.88H1406.6M981.0 495.32H1406.6M981.0 523.76H1406.6" stroke="#e4e4e4" stroke-width="1" fill="none"/><polyline points="981.0,533.6 1010.0,535.2 1034.0,536.0 1047.0,535.6 1060.0,532.0 1074.0,527.0 1088.0,521.0 1100.0,515.0 1118.0,503.0 1140.0,491.0 1160.0,479.6 1178.0,468.0 1188.0,460.0 1194.0,457.0 1200.0,459.0 1206.0,464.5 1214.0,473.0 1222.0,479.5 1234.0,488.0 1247.0,497.0 1260.0,505.0 1274.0,511.0 1288.0,516.4 1300.0,522.0 1310.0,528.0 1319.0,532.0 1330.0,534.0 1354.0,536.8 1380.0,538.8 1406.6,540.4" fill="none" stroke="#e01b24" stroke-width="2.6" stroke-linejoin="round" stroke-linecap="butt"/><rect x="981.0" y="410.0" width="425.6" height="142.2" fill="none" stroke="#8f6a3a" stroke-width="1.1"/><path d="M981.00 552.2V556.7M1034.20 552.2V556.7M1087.40 552.2V556.7M1140.60 552.2V556.7M1193.80 552.2V556.7M1247.00 552.2V556.7M1300.20 552.2V556.7M1353.40 552.2V556.7M1406.60 552.2V556.7M1406.6 410.00H1417.6M1406.6 438.44H1417.6M1406.6 466.88H1417.6M1406.6 495.32H1417.6M1406.6 523.76H1417.6M1406.6 552.20H1417.6" stroke="#8f6a3a" stroke-width="1.1" fill="none"/><text x="980.2" y="566" font-size="7.2" letter-spacing="0.9" text-anchor="middle">-4000</text><text x="1033.4" y="566" font-size="7.2" letter-spacing="0.9" text-anchor="middle">-3000</text><text x="1086.6" y="566" font-size="7.2" letter-spacing="0.9" text-anchor="middle">-2000</text><text x="1139.8" y="566" font-size="7.2" letter-spacing="0.9" text-anchor="middle">-1000</text><text x="1194.2" y="566" font-size="7.2" letter-spacing="0.9" text-anchor="middle">0</text><text x="1247.4" y="566" font-size="7.2" letter-spacing="0.9" text-anchor="middle">1000</text><text x="1300.6" y="566" font-size="7.2" letter-spacing="0.9" text-anchor="middle">2000</text><text x="1353.8" y="566" font-size="7.2" letter-spacing="0.9" text-anchor="middle">3000</text><text x="1407.0" y="566" font-size="7.2" letter-spacing="0.9" text-anchor="middle">4000</text><text x="1423.6" y="411.9" font-size="7.2" letter-spacing="0.9">100</text><text x="1423.6" y="440.3" font-size="7.2" letter-spacing="0.9">80</text><text x="1423.6" y="468.8" font-size="7.2" letter-spacing="0.9">60</text><text x="1423.6" y="497.2" font-size="7.2" letter-spacing="0.9">40</text><text x="1423.6" y="525.7" font-size="7.2" letter-spacing="0.9">20</text><text x="1423.6" y="554.1" font-size="7.2" letter-spacing="0.9">0</text><text x="1192" y="572.6" font-size="7" letter-spacing="0.8" text-anchor="middle">TIME (ms)</text><text transform="translate(1447.6 480) rotate(90)" font-size="7" letter-spacing="0.45" text-anchor="middle">MAGNETIC FIELD (nT)</text></svg>
<span class="m" style="left:964.1px;top:609.21px;font-size:6.77px;line-height:6.77px;color:#3a2a1c">Stat Net Cha Lo        Rate        Lat        Lon   Elev Depth     Dip Azimuth  Instrument</span>
<span class="m" style="left:964.1px;top:620.01px;font-size:6.77px;line-height:6.77px;color:#3a2a1c">--------------------------------------------------------------------------------------------</span>
<span class="m" style="left:964.1px;top:631.41px;font-size:6.77px;line-height:6.77px;color:#3a2a1c">1010  NP HNE RA 200.0000000   39.81260 -122.33628  155.0   0.0     0.0    90.0  Episensor (4 g max 5.0 v/g)</span>
<span class="m" style="left:964.1px;top:642.46px;font-size:6.77px;line-height:6.77px;color:#3a2a1c">1010  NP HNE UT 200.0000000   39.81387 -122.33771  156.0   0.0     0.0    90.0  K2 Episensor (4 g max 1.25 v/g)</span>
<span class="m" style="left:964.1px;top:653.51px;font-size:6.77px;line-height:6.77px;color:#3a2a1c">1010  NP HNN CC 200.0000000   39.81581 -122.33595  154.0   0.0     0.0   360.0  Episensor (4 g max 5.0 v/g)</span>
<span class="m" style="left:964.1px;top:664.56px;font-size:6.77px;line-height:6.77px;color:#3a2a1c">1010  NP HNN D2 200.0000000   39.81780 -122.33590  116.0   0.0     0.0   360.0  Episensor (4 g max 5.0 v/g)</span>
<span class="m" style="left:964.1px;top:675.62px;font-size:6.77px;line-height:6.77px;color:#3a2a1c">1010  NP HNN LT 200.0000000   39.81387 -122.33771  123.0   0.0     0.0   360.0  K2 Episensor (4 g max 1.25 v/g)</span>
<span class="m" style="left:964.1px;top:686.66px;font-size:6.77px;line-height:6.77px;color:#3a2a1c">1010  NP HNN RA 200.0000000   39.81260 -122.33628  155.0   0.0     0.0   360.0  Episensor (4 g max 5.0 v/g)</span>
<span class="m" style="left:964.1px;top:697.71px;font-size:6.77px;line-height:6.77px;color:#3a2a1c">1010  NP HNN UT 200.0000000   39.81387 -122.33771  156.0   0.0     0.0   360.0  K2 Episensor (4 g max 1.25 v/g)</span>
<span class="m" style="left:964.1px;top:708.76px;font-size:6.77px;line-height:6.77px;color:#3a2a1c">1010  NP HNZ CC 200.0000000   39.81581 -122.33595  154.0   0.0   -90.0     0.0  Episensor (4 g max 5.0 v/g)</span>
<span class="m" style="left:964.1px;top:719.81px;font-size:6.77px;line-height:6.77px;color:#3a2a1c">1010  NP HNZ D2 200.0000000   39.81780 -122.33590  116.0   0.0   -90.0     0.0  Episensor (4 g max 5.0 v/g)</span>
<span class="m" style="left:964.1px;top:730.87px;font-size:6.77px;line-height:6.77px;color:#3a2a1c">1010  NP HNZ LT 200.0000000   39.81387 -122.33771  123.0   0.0   -90.0     0.0  K2 Episensor (4 g max 1.25 v/g)</span>
<span class="m" style="left:964.1px;top:741.91px;font-size:6.77px;line-height:6.77px;color:#3a2a1c">1010  NP HNZ RA 200.0000000   39.81260 -122.33628  155.0   0.0   -90.0     0.0  Episensor (4 g max 5.0 v/g)</span>
<span class="m" style="left:964.1px;top:752.96px;font-size:6.77px;line-height:6.77px;color:#3a2a1c">1010  NP HNZ UT 200.0000000   39.81387 -122.33771  156.0   0.0   -90.0     0.0  K2 Episensor (4 g max 1.25 v/g)</span>
<span class="m" style="left:964.1px;top:764.01px;font-size:6.77px;line-height:6.77px;color:#3a2a1c">1017  NP HNE CR 200.0000000   39.19639 -123.18318  234.0   0.0     0.0    90.0  Episensor (4 g max 5.0 v/g)</span>
<span class="m" style="left:964.1px;top:775.06px;font-size:6.77px;line-height:6.77px;color:#3a2a1c">1017  NP HNE DS 200.0000000   39.19638 -123.18488  195.0   0.0     0.0    90.0  Episensor (4 g max 5.0 v/g)</span>
<span class="m" style="left:964.1px;top:786.12px;font-size:6.77px;line-height:6.77px;color:#3a2a1c">1017  NP HNE LA 200.0000000   39.19408 -123.18370  239.0   0.0     0.0    90.0  Episensor (4 g max 5.0 v/g)</span>
<span class="m" style="left:964.1px;top:797.16px;font-size:6.77px;line-height:6.77px;color:#3a2a1c">1017  NP HNE UT 200.0000000   39.19778 -123.18160  225.0   0.0     0.0    90.0  Episensor (4 g max 5.0 v/g)</span>
<span class="m" style="left:964.1px;top:808.21px;font-size:6.77px;line-height:6.77px;color:#3a2a1c">1017  NP HNN CR 200.0000000   39.19639 -123.18318  234.0   0.0     0.0   360.0  Episensor (4 g max 5.0 v/g)</span>
<span class="m" style="left:964.1px;top:819.26px;font-size:6.77px;line-height:6.77px;color:#3a2a1c">1017  NP HNN DS 200.0000000   39.19638 -123.18488  195.0   0.0     0.0   360.0  Episensor (4 g max 5.0 v/g)</span>
</body></html>
